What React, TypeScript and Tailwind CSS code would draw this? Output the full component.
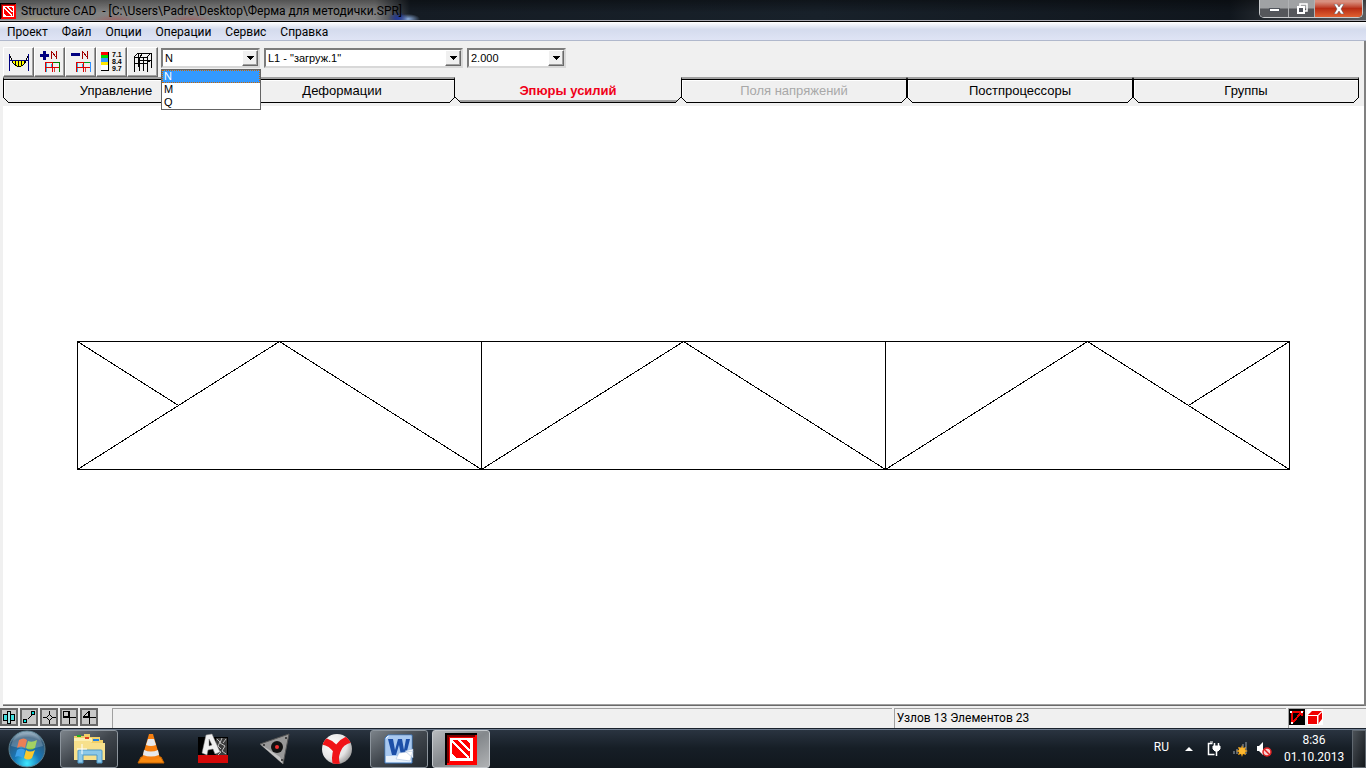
import { useState } from 'react';
import type { ReactNode } from 'react';

const menuItems = ['Проект', 'Файл', 'Опции', 'Операции', 'Сервис', 'Справка'];

const tabs = [
  { id: 'control', label: 'Управление' },
  { id: 'deform', label: 'Деформации' },
  { id: 'forces', label: 'Эпюры усилий' },
  { id: 'stress', label: 'Поля напряжений', disabled: true },
  { id: 'post', label: 'Постпроцессоры' },
  { id: 'groups', label: 'Группы' },
];

const forceTypes = ['N', 'M', 'Q'];

const AppLogo = ({ className }: { className: string }) => (
  <svg className={className} viewBox="0 0 32 32" shapeRendering="crispEdges" aria-hidden="true">
    <path fill="#000" d="M0 0h32v32H0z" />
    <path fill="#f00" d="M2 2h30v30H2z" />
    <path fill="#700" d="M2 2h28v2H4v26H2z" />
    <path fill="#fff" d="M5 5h23v23H5z" />
    <path fill="#f00" d="M7 7h18v18H7z" />
    <path d="M7 8l17 17M14 7l11 11" stroke="#fff" strokeWidth="2" />
    <path fill="#fff" d="M7 21v4h4zM21 7h4v4z" />
  </svg>
);

/* ---------- toolbar icons ---------- */

const DiagramIcon = () => (
  <svg width="24" height="24" viewBox="0 0 24 24" shapeRendering="crispEdges" aria-hidden="true">
    <path d="M5 10h14l-2 5-3 2h-4l-3-2z" fill="#ff0" />
    <path d="M2 5l2 3 2 5 2 2 2 1h4l2-1 2-2 2-5 2-3M8 11v4M11 11v5M14 11v5M17 11v2" fill="none" stroke="#000" />
    <path d="M2 10.500h20" stroke="#000080" />
    <path d="M2.500 4v17M21.500 4v17" stroke="#000080" />
  </svg>
);

const FrameIcon = ({ sign }: { sign: 'plus' | 'minus' }) => (
  <svg width="24" height="24" viewBox="0 0 24 24" shapeRendering="crispEdges" aria-hidden="true">
    {sign === 'plus' ? (
      <path d="M2 4h3V1h3v3h3v3H8v3H5V7H2z" fill="#000080" />
    ) : (
      <path d="M2 3h9v3H2z" fill="#000080" />
    )}
    <path d="M13.500 9V1M14 2l4 5M18.500 1v8" fill="none" stroke="#a00000" />
    <path d="M7.500 22v-9.500h7V22" fill="none" stroke="#e00000" />
    <path d="M15 12.500h6" stroke={sign === 'plus' ? '#008000' : '#00a020'} />
    <path d="M21.500 12v10" stroke={sign === 'plus' ? '#008000' : '#3090ff'} />
    <path d="M8.500 13v9" stroke="#30b0e0" />
    <path d="M13.500 14v4" stroke="#30b0e0" />
    <path d="M8 17.500h13" stroke="#e00000" />
    <path d="M16.500 18v4" stroke="#d04040" />
  </svg>
);

const ScaleIcon = () => (
  <svg width="24" height="24" viewBox="0 0 24 24" aria-hidden="true">
    <g shapeRendering="crispEdges">
      <path d="M1 2h7v3H1z" fill="#f00" />
      <path d="M1 5h7v3H1z" fill="#00d800" />
      <path d="M1 8h7v4H1z" fill="#3399ff" />
      <path d="M1 12h7v3H1z" fill="#ffe800" />
      <path d="M1 15h7v5H1z" fill="#fff" />
      <path d="M8.500 2v19M1 20.500h8" fill="none" stroke="#000" />
    </g>
    <g fontFamily="Liberation Sans, sans-serif" fontSize="7" fontWeight="700" fill="#000">
      <text x="12" y="7">7.1</text>
      <text x="12" y="14">8.4</text>
      <text x="12" y="21">9.7</text>
    </g>
  </svg>
);

const MeshIcon = () => (
  <svg width="24" height="24" viewBox="0 0 24 24" shapeRendering="crispEdges" aria-hidden="true">
    <path
      d="M3.500 22V7.500h13V22M8.500 7v14M12.500 7v14M7.500 17V3.500h13V18M3 7l4-4M16 7l4-4M9 7l3-4M3 13.500h13M7 10.500h13M16 13l4-3"
      fill="none"
      stroke="#000"
    />
  </svg>
);

const ToolButton = ({ label, children }: { label: string; children: ReactNode }) => (
  <button
    type="button"
    aria-label={label}
    className="flex h-[30px] w-[31px] items-center justify-center border border-t-white border-r-[#696969] border-b-[#696969] border-l-white bg-[#f0f0f0] shadow-[inset_-1px_-1px_0_#a0a0a0]"
  >
    {children}
  </button>
);

/* ---------- combo box ---------- */

interface ComboProps {
  label: string;
  value: string;
  options: string[];
  width: string;
  onChange: (v: string) => void;
  children?: ReactNode;
}

const Combo = ({ label, value, options, width, onChange, children }: ComboProps) => (
  <div className={`relative h-5 ${width}`}>
    <select
      aria-label={label}
      value={value}
      onChange={(e) => onChange(e.target.value)}
      className="block h-5 w-full appearance-none border-2 border-t-[#7c7c7c] border-r-[#d8d8d8] border-b-[#d8d8d8] border-l-[#7c7c7c] bg-white pl-[2px] text-[11px] leading-4 text-black outline-none"
    >
      {options.map((o) => (
        <option key={o}>{o}</option>
      ))}
    </select>
    <span className="pointer-events-none absolute top-[2px] right-[2px] flex h-4 w-4 items-center justify-center border border-t-white border-r-[#696969] border-b-[#696969] border-l-white bg-[#f0f0f0] shadow-[inset_-1px_-1px_0_#a0a0a0]">
      <svg width="7" height="4" viewBox="0 0 7 4" shapeRendering="crispEdges">
        <path d="M0 0h7v1H0zM1 1h5v1H1zM2 2h3v1H2zM3 3h1v1H3z" />
      </svg>
    </span>
    {children}
  </div>
);

/* ---------- tabs ---------- */

const Corner = ({ side }: { side: 'left' | 'right' }) => (
  <svg
    width="6"
    height="6"
    viewBox="0 0 6 6"
    shapeRendering="crispEdges"
    className={side === 'left' ? 'absolute -bottom-px -left-px' : 'absolute -right-px -bottom-px -scale-x-100'}
    aria-hidden="true"
  >
    <path d="M0 0v6h6z" fill="#f0f0f0" />
    <path d="M0 0l6 6" stroke="#000" />
  </svg>
);

const TabButton = ({ label, active, disabled, onClick }: { label: string; active: boolean; disabled?: boolean; onClick: () => void }) => {
  const look = active
    ? 'border-transparent border-b-black pt-[2px] font-bold text-[#f00018] shadow-[inset_0_-2px_0_#a0a0a0]'
    : 'border-t-2 border-black border-t-[#a0a0a0] shadow-[inset_0_1px_0_#000,inset_1px_2px_0_#fff]';
  return (
    <button
      type="button"
      role="tab"
      aria-selected={active}
      disabled={disabled}
      onClick={onClick}
      className={`relative h-[26px] border bg-[#f0f0f0] text-center text-[13px] leading-5 ${look} ${disabled ? 'text-[#a8a8a8]' : active ? '' : 'text-black'}`}
    >
      {label}
      <Corner side="left" />
      <Corner side="right" />
    </button>
  );
};

/* ---------- truss ---------- */

const Truss = () => (
  <svg className="w-full overflow-visible" viewBox="0 0 1213 129" shapeRendering="crispEdges" fill="none" stroke="#000" role="img" aria-label="Ферма">
    <path d="M0.500 0.500h1212v128H0.500zM404.500 0v128M808.500 0v128" />
    <path d="M0.500 0.500L101.500 64.500M0.500 128.500L202.500 0.500L404.500 128.500L606.500 0.500L808.500 128.500L1010.500 0.500L1212.500 128.500M1111.500 64.500L1212.500 0.500" />
  </svg>
);

/* ---------- status bar ---------- */

const statusIcons = [
  {
    label: 'Сечения',
    art: (
      <>
        <path d="M1.500 4.500h4v6h-4zM8.500 4.500h4v6h-4z" fill="#40e0e0" />
        <path d="M5.500 1.500h3v12h-3z" fill="#a8e8e8" />
      </>
    ),
  },
  {
    label: 'Элементы',
    art: (
      <>
        <path d="M4 11l7-7" strokeDasharray="2 1" />
        <path d="M1.500 9.500h3v3h-3zM9.500 1.500h3v3h-3z" fill="#00e0e0" />
      </>
    ),
  },
  { label: 'Узлы', art: <path d="M7.500 1v4M7.500 10v4M1 7.500h4M10 7.500h4M7.500 4.500l3 3-3 3-3-3z" /> },
  { label: 'Связи', art: <path d="M1.500 1.500h5v5h-5zM7.500 1v13M1 7.500h13" /> },
  { label: 'Шарниры', art: <path d="M6.500 1.500v5h-5zM7.500 1v13M1 7.500h13" /> },
];

const StatusBar = () => (
  <footer className="flex h-[22px] items-stretch bg-[#f0f0f0] pt-[2px] font-[Roboto,'Noto_Sans',sans-serif] text-[12px] leading-[18px] text-black">
    <div className="flex w-[110px] gap-[2px]">
      {statusIcons.map((s) => (
        <button key={s.label} type="button" aria-label={s.label} className="flex h-[18px] w-[18px] items-center justify-center border-2 border-[#686868] bg-[#c8c8c8]">
          <svg width="14" height="14" viewBox="0 0 14 14" shapeRendering="crispEdges" fill="none" stroke="#000">
            {s.art}
          </svg>
        </button>
      ))}
    </div>
    <div className="ml-[2px] flex-2 border-t border-l border-[#a0a0a0]" />
    <div className="ml-[2px] flex-1 border-t border-l border-[#a0a0a0] pl-[2px]">Узлов 13 Элементов 23</div>
    <div className="ml-[2px] flex w-[78px] gap-[2px] border-t border-l border-[#a0a0a0]">
      <svg width="16" height="16" viewBox="0 0 16 16" shapeRendering="crispEdges" aria-hidden="true">
        <path d="M0 0h16v16H0z" />
        <path d="M2 3h11L3 14M3 4v10M13 3v4" fill="none" stroke="#f00000" strokeWidth="2" />
        <path d="M1 2h2v2H1zM12 2h2v2h-2zM2 13h2v2H2z" fill="#fff" />
      </svg>
      <svg width="16" height="16" viewBox="0 0 16 16" aria-hidden="true">
        <path d="M0 0h16v16H0z" fill="#fff" />
        <path d="M1 6l4-4h10l-4 4zM1 7h9v8H1zM11 7l4-4v7l-4 5z" fill="#f00000" />
        <path d="M1 6.500h10v8M11 6.500l4-4" fill="none" stroke="#fff" />
      </svg>
    </div>
  </footer>
);

/* ---------- taskbar ---------- */

const StartOrb = () => (
  <svg width="38" height="38" viewBox="0 0 38 38" aria-hidden="true">
    <defs>
      <radialGradient id="orb" cx="0.5" cy="0.9" r="0.9">
        <stop offset="0" stopColor="#40e8ff" />
        <stop offset="0.4" stopColor="#1878b8" />
        <stop offset="0.8" stopColor="#305878" />
        <stop offset="1" stopColor="#a8c0d0" />
      </radialGradient>
    </defs>
    <circle cx="19" cy="19" r="18" fill="url(#orb)" stroke="#5b8090" />
    <path d="M11 10q5-3 8 0l-2 8q-4-3-8 0z" fill="#e8602c" />
    <path d="M20 11q4 2 9-1l-2 8q-5 3-9 0z" fill="#8cc63c" />
    <path d="M9 20q4-3 8 0l-2 8q-4-3-8-1z" fill="#3ca0e8" />
    <path d="M18 20q4 3 9 0l-3 8q-4 3-8 0z" fill="#fcc82c" />
    <path d="M3 16Q6 3 19 3t16 13Q19 21 3 16z" fill="#fff" opacity="0.2" />
  </svg>
);

const ExplorerIcon = () => (
  <svg width="34" height="32" viewBox="0 0 34 32" aria-hidden="true">
    <path d="M2 3h10v-2h6v3h10v3h3v20H2z" fill="#f0cf68" />
    <path d="M2 5h18v4H2z" fill="#fbeeb0" />
    <path d="M5 2h4v2H5z" fill="#20b020" />
    <path d="M13 4h4v2h-4z" fill="#e04020" />
    <path d="M21 6h6v2h-6z" fill="#2080e0" />
    <path d="M2 8h16l2 2h13v17H2z" fill="#f7e08c" />
    <path d="M6 30V18q0-1 1-1h22q1 0 1 1v12h-5v-8H11v8z" fill="#8cc8e8" stroke="#4c98c8" />
    <path d="M10 11v10M5 16h10" stroke="#fff" />
  </svg>
);

const VlcIcon = () => (
  <svg width="28" height="31" viewBox="0 0 28 31" aria-hidden="true">
    <path d="M4 24h20l3 6H1z" fill="#f88a10" stroke="#c86400" />
    <path d="M12 1h4l7 24q-9 4-18 0z" fill="#f57f10" />
    <path d="M11 6h6l2 6q-5 2-10 0zM7 17q7 3 14 0l1 5q-8 3-16 0z" fill="#e6e9ee" />
  </svg>
);

const AutocadIcon = () => (
  <svg width="32" height="32" viewBox="0 0 32 32" aria-hidden="true">
    <path d="M1 4h30v26H1z" fill="#000" />
    <path d="M19 5h11v17H19z" fill="#3c3c3c" />
    <path d="M20 6l3 3-2 4 3 3M25 5l-2 5 5 3-3 5 4 3M29 6l-3 4M20 17l4 2-3 3" fill="none" stroke="#c0c0c0" />
    <path d="M1 22h30v8H1z" fill="#d40808" />
    <path d="M5 20L9 2l6-1 8 18-5 2-2-5-5 1-1 5zM12 13l3-1-3-6z" fill="#f0f0f0" fillRule="evenodd" stroke="#888" strokeWidth="0.500" />
  </svg>
);

const TriangleIcon = () => (
  <svg width="32" height="32" viewBox="0 0 32 32" aria-hidden="true">
    <path d="M1 11L30 1l-6 30z" fill="#989898" stroke="#555" />
    <path d="M1 11l23 20-3-7z" fill="#c4c4c4" />
    <circle cx="18" cy="14" r="6" fill="#111" />
    <circle cx="18" cy="14" r="2" fill="#f03030" />
    <path d="M4 11h2v2H4zM26 4h2v2h-2zM22 26h2v2h-2z" fill="#444" />
  </svg>
);

const YandexIcon = () => (
  <svg width="32" height="32" viewBox="0 0 32 32" aria-hidden="true">
    <defs>
      <radialGradient id="ya" cx="0.35" cy="0.35" r="0.8">
        <stop offset="0" stopColor="#fff" />
        <stop offset="0.6" stopColor="#e4e4e4" />
        <stop offset="1" stopColor="#808080" />
      </radialGradient>
      <clipPath id="yaBall">
        <circle cx="16" cy="16" r="15" />
      </clipPath>
    </defs>
    <circle cx="16" cy="16" r="15" fill="url(#ya)" />
    <path d="M1 8q9 1 15 10Q19 8 31 6M16 17q-3 8 0 16" fill="none" stroke="#f01418" strokeWidth="7" clipPath="url(#yaBall)" />
  </svg>
);

const WordIcon = () => (
  <svg width="32" height="32" viewBox="0 0 32 32" aria-hidden="true">
    <path d="M5 2h24v28H2V5z" fill="#e8f1fb" stroke="#3c78c0" />
    <path d="M3 6l3-3h22v20H3z" fill="#a8c8f0" />
    <path d="M5 6h5l2 11 3-11h4l2 11 2-11h4l-4 16h-5l-2-10-3 10H9z" fill="#1c4fa8" />
    <path d="M16 20l14-2-3 10-14-2zM22 18l8-2v9z" fill="#fff" stroke="#9ab4d8" strokeWidth="0.500" />
  </svg>
);

const TaskButton = ({ label, state, children }: { label: string; state: 'idle' | 'open' | 'active'; children: ReactNode }) => {
  const look = {
    idle: 'border-transparent',
    open: 'border-[#8c949c] bg-linear-to-br from-[#7c838a] via-[#40464d] to-[#23292f]',
    active: 'border-[#c4c8cc] bg-linear-to-br from-[#b8bbbe] via-[#84888c] to-[#b0b2b4]',
  }[state];
  return (
    <button type="button" aria-label={label} className={`flex h-[38px] w-[58px] items-center justify-center rounded-[3px] border ${look}`}>
      {children}
    </button>
  );
};

const Taskbar = () => (
  <nav aria-label="Панель задач" className="flex h-10 items-center border-t border-[#1a222c] bg-linear-to-b from-[#2b3542] via-[#161e26] to-[#11171d] font-[Roboto,'Noto_Sans',sans-serif] text-[12px] text-white shadow-[inset_0_1px_0_#6f7d90]">
    <button type="button" aria-label="Пуск" className="mr-[14px] ml-2">
      <StartOrb />
    </button>
    <div className="flex gap-1">
      <TaskButton label="Проводник" state="open"><ExplorerIcon /></TaskButton>
      <TaskButton label="VLC" state="idle"><VlcIcon /></TaskButton>
      <TaskButton label="AutoCAD" state="idle"><AutocadIcon /></TaskButton>
      <TaskButton label="Камера" state="idle"><TriangleIcon /></TaskButton>
      <TaskButton label="Яндекс" state="idle"><YandexIcon /></TaskButton>
      <TaskButton label="Word" state="open"><WordIcon /></TaskButton>
      <TaskButton label="Structure CAD" state="active"><AppLogo className="h-8 w-8" /></TaskButton>
    </div>
    <div className="ml-auto flex h-full items-center">
      <span className="pb-1">RU</span>
      <svg className="ml-4" width="8" height="4" viewBox="0 0 8 4" aria-hidden="true"><path d="M4 0l4 4H0z" fill="#fff" /></svg>
      <svg className="ml-[14px]" width="14" height="16" viewBox="0 0 14 16" fill="none" stroke="#fff" aria-hidden="true">
        <path d="M5.500 2.500h-4v11h6" strokeWidth="1.500" />
        <path d="M3 1h3" />
        <path d="M6 5h7v3l-2 2H8L6 8z" fill="#fff" />
        <path d="M7.500 2v3M11.500 2v3M9.500 10v5" strokeWidth="1.500" />
      </svg>
      <svg className="ml-[11px]" width="16" height="16" viewBox="0 0 16 16" aria-hidden="true">
        <path d="M1 10h2v3H1zM4 8h2v5H4zM7 6h2v7H7zM10 3h2v10h-2zM13 1h2v12h-2z" fill="#5c646c" />
        <path d="M10 4l1 3 3-1-1 3 3 1-3 1 1 3-3-1-1 3-1-3-3 1 1-3-3-1 3-1-1-3 3 1z" fill="#f8a818" />
        <circle cx="10" cy="10" r="3" fill="#fcb830" />
      </svg>
      <svg className="ml-2" width="16" height="16" viewBox="0 0 16 16" aria-hidden="true">
        <path d="M1 5h2l4-4v13l-4-4H1z" fill="#fff" />
        <circle cx="11" cy="11" r="4" fill="#f8d0d0" stroke="#e02020" strokeWidth="1.500" />
        <path d="M8 8l6 6" stroke="#e02020" strokeWidth="1.500" />
      </svg>
      <div className="mr-2 ml-3 w-[60px] text-center leading-[17px]">
        <div>8:36</div>
        <div>01.10.2013</div>
      </div>
      <button type="button" aria-label="Показать рабочий стол" className="h-[38px] w-[14px] border border-[#606870] bg-linear-to-br from-[#4c5258] to-[#14181c]" />
    </div>
  </nav>
);

/* ---------- window ---------- */

const TitleBar = () => (
  <header className="flex h-[22px] items-start justify-between border-b border-black bg-[radial-gradient(10px_6px_at_398px_18px,#2038a0,transparent),radial-gradient(12px_5px_at_408px_19px,#8fb0e0,transparent),radial-gradient(30px_8px_at_40px_22px,#a8a080,transparent),radial-gradient(24px_8px_at_115px_22px,#a06060,transparent),radial-gradient(24px_8px_at_190px_22px,#a06060,transparent),linear-gradient(#00000060,transparent_60%),linear-gradient(90deg,#808080_0,#868686_250px,#808080_375px,#151c24_410px,#18212a_60%,#10161d_90%,#5a5d60_100%)] shadow-[inset_0_-1px_0_#a8a8b0]">
    <div className="flex items-center gap-[5px] pt-[2px] font-[Roboto,'Noto_Sans',sans-serif] text-[12px] leading-[18px] text-black">
      <AppLogo className="h-4 w-4" />
      <h1 className="whitespace-pre">{'Structure CAD  - [C:\\Users\\Padre\\Desktop\\Ферма для методички.SPR]'}</h1>
    </div>
    <div className="mr-[3px] flex h-[18px] overflow-hidden rounded-b-[5px] border border-t-0 border-[#c8cacc]">
      <button type="button" aria-label="Свернуть" className="flex w-[29px] items-end justify-center border-r border-[#b0b2b4] bg-linear-to-b from-[#a0a2a4] from-45% to-[#55575b] to-55% pb-[5px]">
        <span className="h-[4px] w-[11px] border border-[#50545c] bg-white" />
      </button>
      <button type="button" aria-label="Свернуть в окно" className="flex w-[26px] items-center justify-center border-r border-[#b0b2b4] bg-linear-to-b from-[#a0a2a4] from-45% to-[#55575b] to-55%">
        <svg width="12" height="12" viewBox="0 0 12 12" fill="none" aria-hidden="true">
          <path d="M4 3V1h7v7H9" stroke="#fff" strokeWidth="1.500" />
          <path d="M2 4h6v6H2z" fill="#50545c" stroke="#fff" strokeWidth="2" />
        </svg>
      </button>
      <button type="button" aria-label="Закрыть" className="flex w-[47px] items-center justify-center bg-linear-to-b from-[#d89080] from-10% via-[#b82c14] via-50% to-[#e06030]">
        <svg width="12" height="10" viewBox="0 0 12 10" aria-hidden="true">
          <path d="M1 0h3l2 3 2-3h3L8 5l3 5H8L6 7l-2 3H1l3-5z" fill="#fff" stroke="#4c4c58" strokeWidth="0.500" />
        </svg>
      </button>
    </div>
  </header>
);

export default function App() {
  const [tab, setTab] = useState('forces');
  const [force, setForce] = useState('N');
  const [load, setLoad] = useState('L1 - "загруж.1"');
  const [scale, setScale] = useState('2.000');
  const [listOpen, setListOpen] = useState(true);

  const pickForce = (f: string) => {
    setForce(f);
    setListOpen(false);
  };

  return (
    <div className="flex min-h-screen flex-col bg-[#f0f0f0] font-['Liberation_Sans',Arial,sans-serif]">
      <TitleBar />

      <nav aria-label="Меню" className="flex h-[19px] items-center gap-[14px] border-b border-[#b0b8cc] bg-linear-to-b from-white from-0% via-[#d4dbed] via-40% to-[#dfe4f5] px-[7px] pt-[2px] font-[Roboto,'Noto_Sans',sans-serif] text-[12px] leading-4 text-black">
        {menuItems.map((m) => (
          <button key={m} type="button">{m}</button>
        ))}
      </nav>

      <div className="flex flex-1 flex-col border-r-2 border-r-[#808080] pl-[3px]">
        <div className="flex h-9 items-end">
          <ToolButton label="Эпюры"><DiagramIcon /></ToolButton>
          <ToolButton label="Увеличить"><FrameIcon sign="plus" /></ToolButton>
          <ToolButton label="Уменьшить"><FrameIcon sign="minus" /></ToolButton>
          <ToolButton label="Шкала значений"><ScaleIcon /></ToolButton>
          <ToolButton label="Сетка"><MeshIcon /></ToolButton>
          <div className="mb-[9px] ml-[3px] flex gap-1">
            <Combo label="Усилие" value={force} options={forceTypes} width="w-[99px]" onChange={setForce}>
              {listOpen && (
                <ul role="listbox" aria-label="Список усилий" className="absolute top-full left-0 z-10 mt-px w-[100px] border border-[#646464] bg-white text-[11px] leading-[13px]">
                  {forceTypes.map((f) => (
                    <li
                      key={f}
                      role="option"
                      aria-selected={f === force}
                      onClick={() => pickForce(f)}
                      className={f === force ? 'bg-[#3399ff] pl-[2px] text-white outline-1 -outline-offset-1 outline-[#cc6600] outline-dotted' : 'pl-[2px] text-black'}
                    >
                      {f}
                    </li>
                  ))}
                </ul>
              )}
            </Combo>
            <Combo label="Загружение" value={load} options={['L1 - "загруж.1"']} width="w-[199px]" onChange={setLoad} />
            <Combo label="Масштаб" value={scale} options={['2.000']} width="w-[99px]" onChange={setScale} />
          </div>
        </div>

        <div role="tablist" className="grid grid-cols-6 pr-[5px] pb-[3px]">
          {tabs.map((t) => (
            <TabButton key={t.id} label={t.label} active={t.id === tab} disabled={t.disabled} onClick={() => setTab(t.id)} />
          ))}
        </div>

        <main className="flex flex-1 items-center bg-white px-[74px]">
          <Truss />
        </main>
        <div className="h-[2px] border-t border-[#a0a0a0] bg-[#696969]" />
      </div>

      <StatusBar />
      <Taskbar />
    </div>
  );
}
